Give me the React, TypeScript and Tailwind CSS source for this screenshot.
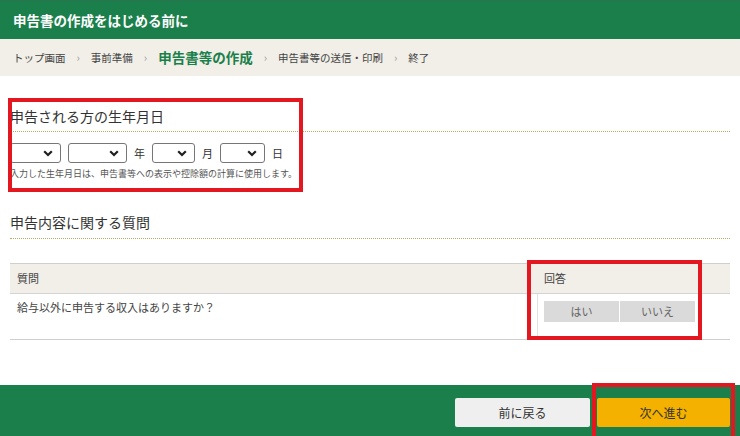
import React from "react";

const font = { fontFamily: '"Noto Sans CJK JP", "Noto Sans", sans-serif' };

function Chevron() {
  return (
    <svg
      width="10"
      height="7"
      viewBox="0 0 10 7"
      className="pointer-events-none absolute right-[8px] top-[7px]"
    >
      <path d="M1.2 1.2 L5 5 L8.8 1.2" stroke="#1f1f1f" strokeWidth="2.2" fill="none" />
    </svg>
  );
}

function Sel({ className }: { className: string }) {
  return (
    <div className={"relative h-[20px] " + className}>
      <select className="h-full w-full appearance-none rounded-[3px] border border-[#767676] bg-white" />
      <Chevron />
    </div>
  );
}

function Sep() {
  return <span className="mx-[11px] text-[11px] text-[#999]">›</span>;
}

export default function App() {
  return (
    <div className="relative h-[436px] w-[740px] overflow-hidden bg-white text-[#333]" style={font}>
      {/* header */}
      <div className="flex h-[39px] items-center border-t border-[#2a7550] bg-[#1b7f4b] pl-[13px] text-[13.5px] font-bold text-white">
        申告書の作成をはじめる前に
      </div>
      {/* breadcrumb */}
      <div className="flex h-[37px] items-center bg-[#f1efe8] pl-[13px] text-[10.5px] text-[#444]">
        <span>トップ画面</span>
        <Sep />
        <span>事前準備</span>
        <Sep />
        <span className="text-[13.5px] font-bold text-[#1b7f4b]">申告書等の作成</span>
        <Sep />
        <span>申告書等の送信・印刷</span>
        <Sep />
        <span>終了</span>
      </div>

      <div className="px-[10px]">
        {/* section 1 */}
        <div className="mt-[30px] border-b border-dotted border-[#b5ae5e] pb-[5px] text-[14px] leading-[20px] text-[#333]">
          申告される方の生年月日
        </div>
        <div className="mt-[11px] flex items-center text-[11px] text-[#333]">
          <Sel className="w-[51px]" />
          <Sel className="ml-[7px] w-[59px]" />
          <span className="mx-[7px]">年</span>
          <Sel className="w-[43px]" />
          <span className="mx-[7px]">月</span>
          <Sel className="w-[45px]" />
          <span className="ml-[7px]">日</span>
        </div>
        <div className="mt-[5px] text-[9px] leading-[12px] text-[#555]">
          入力した生年月日は、申告書等への表示や控除額の計算に使用します。
        </div>

        {/* section 2 */}
        <div className="mt-[32px] border-b border-dotted border-[#b5ae5e] pb-[6px] text-[14px] leading-[20px] text-[#333]">
          申告内容に関する質問
        </div>

        <div className="mt-[24px] border-y border-[#cfcfcf] text-[11px] text-[#444]">
          <div className="flex h-[30px] items-center border-b border-[#d4d4d4] bg-[#f1efe8]">
            <div className="flex-1 pl-[7px]">質問</div>
            <div className="w-[193px] pl-[7px]">回答</div>
          </div>
          <div className="flex h-[45px]">
            <div className="flex-1 pl-[7px] pt-[6px] leading-[14px]">給与以外に申告する収入はありますか？</div>
            <div className="flex w-[193px] items-start border-l border-[#e2e2e2] pl-[6px] pt-[7px]">
              <div className="flex h-[21px] w-[75px] items-center justify-center bg-[#dadada] text-[#666]">はい</div>
              <div className="ml-[1px] flex h-[21px] w-[75px] items-center justify-center bg-[#dadada] text-[#666]">いいえ</div>
            </div>
          </div>
        </div>
      </div>

      {/* footer */}
      <div className="mt-[45px] flex h-[51px] items-start justify-end bg-[#1b7f4b] pr-[10px] pt-[13px] text-[12px]">
        <div className="flex h-[29px] w-[135px] items-center justify-center rounded-[2px] bg-[#efefef] text-[#333]">
          前に戻る
        </div>
        <div className="ml-[7px] flex h-[29px] w-[133px] items-center justify-center rounded-[2px] bg-[#f5b100] text-[#333]">
          次へ進む
        </div>
      </div>

      {/* red annotation boxes */}
      <div className="pointer-events-none absolute left-[8px] top-[98px] h-[94px] w-[295px] border-4 border-[#e3171f]" />
      <div className="pointer-events-none absolute left-[527px] top-[260px] h-[80px] w-[175px] border-4 border-[#e3171f]" />
      <div className="pointer-events-none absolute left-[592px] top-[383px] h-[60px] w-[143px] border-4 border-[#e3171f]" />
    </div>
  );
}
